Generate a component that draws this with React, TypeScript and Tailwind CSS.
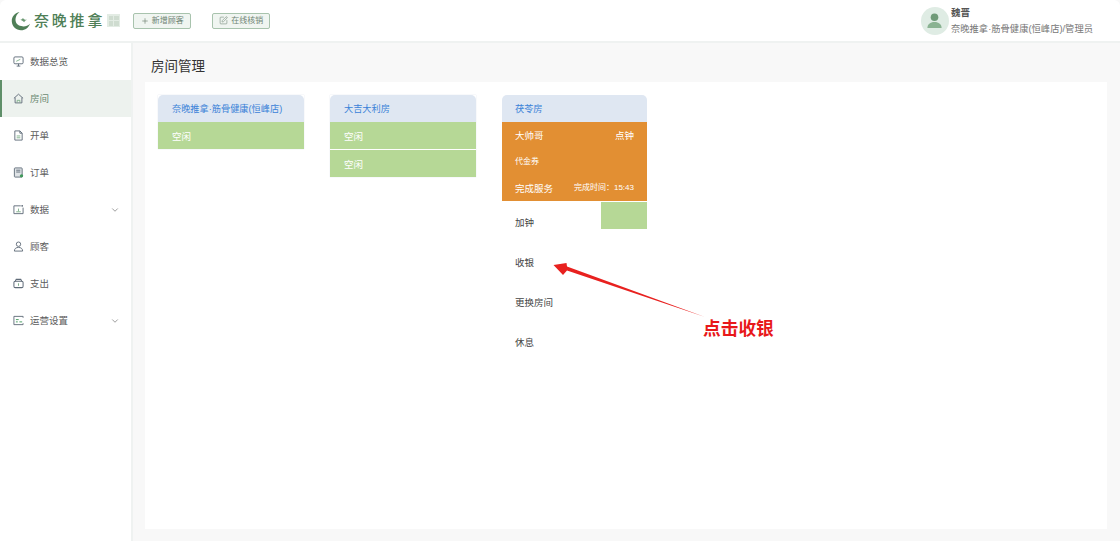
import { ChevronDown, Plus, SquarePen } from "lucide-react";
import type { ReactNode } from "react";

const FONT = "font-['Liberation_Sans','Noto_Sans_CJK_SC',sans-serif]";

const iconClass = "w-[11px] h-[11px] text-[#5f6b78]";
const ACCENT = "#7fb08a";

const DashIcon = () => (
    <svg viewBox="0 0 12 12" className={iconClass} fill="none" stroke="currentColor" strokeWidth="1">
        <rect x="1" y="1" width="10" height="7.500" rx="1.200" />
        <path d="M4 11h4M6 8.500V11" />
        <path d="M3.500 5.800 8 3.600" stroke={ACCENT} />
    </svg>
);
const HomeIcon = () => (
    <svg viewBox="0 0 12 12" className={iconClass} fill="none" stroke="currentColor" strokeWidth="1">
        <path d="M1 5.800 6 1.300l5 4.500M2.300 5v5.800h7.400V5" />
        <path d="M4.500 10.500V8h3v2.500" stroke={ACCENT} />
    </svg>
);
const DocIcon = () => (
    <svg viewBox="0 0 12 12" className={iconClass} fill="none" stroke="currentColor" strokeWidth="1">
        <path d="M2 1h5.500L10 3.500V11H2zM7.500 1v2.500H10" />
        <path d="M4 6.500h4M4 8.500h4" stroke={ACCENT} />
    </svg>
);
const OrderIcon = () => (
    <svg viewBox="0 0 12 12" className={iconClass} fill="none" stroke="currentColor" strokeWidth="1">
        <rect x="1.500" y="1" width="8.500" height="10" rx="0.800" fill="#dfe3e6" />
        <path d="M3.500 3.500h4.500M3.500 5.500h4.500" />
        <circle cx="9.300" cy="9.600" r="1.800" fill="#3f9a5a" stroke="none" />
    </svg>
);
const ChartIcon = () => (
    <svg viewBox="0 0 12 12" className={iconClass} fill="none" stroke="currentColor" strokeWidth="1">
        <path d="M8.500 2H1v8.500h10V4" />
        <path d="M3.500 8.500h5M6 8V5" stroke={ACCENT} />
        <circle cx="10" cy="2" r="1" fill="currentColor" stroke="none" />
    </svg>
);
const UserIcon = () => (
    <svg viewBox="0 0 12 12" className={iconClass} fill="none" stroke="currentColor" strokeWidth="1">
        <circle cx="6" cy="3.500" r="2.400" />
        <path d="M1.500 11c0-2.600 1.800-4 4.500-4s4.500 1.400 4.500 4z" />
    </svg>
);
const WalletIcon = () => (
    <svg viewBox="0 0 12 12" className={iconClass} fill="none" stroke="currentColor" strokeWidth="1.100">
        <rect x="1" y="3.500" width="10" height="7" rx="1.500" />
        <path d="M2.500 3.500 3.500 1.500h5l1 2" />
        <path d="M6 5.800v2.700" stroke={ACCENT} />
    </svg>
);
const SettingIcon = () => (
    <svg viewBox="0 0 12 12" className={iconClass} fill="none" stroke="currentColor" strokeWidth="1">
        <path d="M11 3V1.500H1v9h10V9" />
        <path d="M3.200 5h3M3.200 7.500h2M7 7.500h3" stroke="#3f9a5a" />
    </svg>
);

const menu: { label: string; icon: ReactNode; active?: boolean; arrow?: boolean }[] = [
    { label: "数据总览", icon: <DashIcon /> },
    { label: "房间", icon: <HomeIcon />, active: true },
    { label: "开单", icon: <DocIcon /> },
    { label: "订单", icon: <OrderIcon /> },
    { label: "数据", icon: <ChartIcon />, arrow: true },
    { label: "顾客", icon: <UserIcon /> },
    { label: "支出", icon: <WalletIcon /> },
    { label: "运营设置", icon: <SettingIcon />, arrow: true },
];

const Logo = () => (
    <div className="flex items-center">
        <svg viewBox="0 0 20 20" className="w-[20px] h-[20px]" fill="none">
            <path d="M8.500 1C3.500 2 .5 6 .8 10.500c.3 5 4.300 8.700 9.200 8.700 4.300 0 7.800-2.700 9-6.500-2.500 2.400-5.700 3.200-8.800 2.400C6.500 14.700 4.200 11.500 4.500 8 4.800 5 6.200 2.700 8.500 1z" fill="#4f7f57" />
            <path d="M8 8.500c1.500.6 2.800.2 4-1.500.6 1.300 1.800 2 4 1.800-1.500.6-2.400 1.300-2.800 2.500-.8-1.300-2.500-2.200-5.200-2.800z" fill="#6d9a74" />
        </svg>
        <span className="ml-[3px] text-[15px] leading-none font-medium tracking-[2.800px] text-[#4f7f57]">奈晚推拿</span>
        <span className="ml-[2px] w-[13px] h-[13px] grid grid-cols-2 gap-[1px] p-[1.500px] bg-[#e3ece4]">
            <i className="bg-[#cfdcd0]" />
            <i className="bg-[#cfdcd0]" />
            <i className="bg-[#cfdcd0]" />
            <i className="bg-[#cfdcd0]" />
        </span>
    </div>
);

const TopButton = ({ icon, label }: { icon: ReactNode; label: string }) => (
    <button className="w-[58px] h-[16px] flex items-center justify-center gap-[3px] rounded-[2px] border border-[#a8c3ad] bg-[#f0f5f1] text-[8px] leading-none text-[#6f8474]">
        {icon}
        {label}
    </button>
);

const RoomHead = ({ title, inset = "pl-[14px]" }: { title: string; inset?: string }) => (
    <div className={`h-[27px] ${inset} pt-[2px] flex items-center rounded-t-[5px] bg-[#dfe7f2] text-[9.200px] text-[#3b82d8]`}>{title}</div>
);

const FreeRow = () => (
    <div className="h-[27px] pl-[14px] pt-[4px] flex items-center bg-[#b6d896] text-[9.500px] text-white">空闲</div>
);

const App = () => {
    return (
        <div className={`${FONT} w-[1120px] h-[541px] overflow-hidden flex flex-col bg-[#f8f8f8]`}>
            <header className="h-[43px] shrink-0 pl-[11px] pr-[27px] flex items-center rounded-t-[6px] bg-white border-b-2 border-[#eff2f1]">
                <Logo />
                <div className="ml-[13px] flex gap-[21px]">
                    <TopButton icon={<Plus className="w-[8px] h-[8px]" />} label="新增顾客" />
                    <TopButton icon={<SquarePen className="w-[9px] h-[9px]" strokeWidth={1.500} />} label="在线核销" />
                </div>
                <div className="ml-auto flex items-center gap-[2px]">
                    <div className="w-[28px] h-[28px] rounded-full bg-[#dfece4] flex items-center justify-center">
                        <svg viewBox="0 0 20 20" className="w-[19px] h-[19px]">
                            <circle cx="10" cy="6.500" r="4" fill="#6f9a78" />
                            <path d="M2.500 18c0-4 3-6.500 7.500-6.500s7.500 2.500 7.500 6.500z" fill="#8ab392" />
                        </svg>
                    </div>
                    <div className="flex flex-col gap-[4px] pt-[1px]">
                        <span className="text-[9.500px] leading-[12px] font-bold text-[#555]">魏晋</span>
                        <span className="text-[9.300px] leading-[12px] text-[#777]">奈晚推拿·筋骨健康(恒峰店)/管理员</span>
                    </div>
                </div>
            </header>

            <div className="flex-1 flex min-h-0">
                <aside className="w-[133px] shrink-0 bg-white border-r-2 border-[#eff2f1]">
                    {menu.map((item) => (
                        <div
                            key={item.label}
                            className={`h-[37px] pl-[11px] pr-[11px] flex items-center border-l-2 ${
                                item.active ? "border-[#5f8f69] bg-[#edf2ee] text-[#6b8a72]" : "border-transparent text-[#5c5c5c]"
                            }`}
                        >
                            {item.icon}
                            <span className="ml-[6px] pt-[1px] text-[9.500px]">{item.label}</span>
                            {item.arrow && <ChevronDown className="ml-auto w-[10px] h-[10px] text-[#8a8a8a]" />}
                        </div>
                    ))}
                </aside>

                <main className="flex-1 pl-[12px] pr-[13px] pb-[12px] flex flex-col min-w-0">
                    <h1 className="h-[39px] pl-[6px] pt-[10px] flex items-center text-[13.500px] text-[#333]">房间管理</h1>
                    <div className="flex-1 bg-white pl-[13px] pt-[13px] flex gap-[26px] items-start">
                        <section className="w-[146px] shadow-[0_0_1px_#d5dde5]">
                            <RoomHead title="奈晚推拿·筋骨健康(恒峰店)" />
                            <FreeRow />
                        </section>
                        <section className="w-[146px] shadow-[0_0_1px_#d5dde5]">
                            <RoomHead title="大吉大利房" />
                            <div className="flex flex-col gap-[1px]">
                                <FreeRow />
                                <FreeRow />
                            </div>
                        </section>
                        <section className="w-[145px] relative">
                            <RoomHead title="茯苓房" inset="pl-[13px]" />
                            <div className="h-[79px] pl-[13px] pr-[13px] flex flex-col justify-between pt-[7px] pb-[5px] bg-[#e28f33] text-white">
                                <div className="flex justify-between text-[9.500px]">
                                    <span>大帅哥</span>
                                    <span>点钟</span>
                                </div>
                                <span className="pt-[2px] text-[8px]">代金券</span>
                                <div className="flex justify-between items-center text-[9.500px] pt-[3px]">
                                    <span>完成服务</span>
                                    <span className="text-[8px] pb-[2px]">完成时间：15:43</span>
                                </div>
                            </div>
                            <div className="mt-[1px] h-[27px] bg-[#b6d896]" />
                            <div className="absolute left-0 top-[107px] w-[99px] pl-[13px] text-[9.500px] text-[#444]">
                                <div className="h-[27px] bg-white -ml-[13px] pl-[13px] pt-[14px] leading-[14px]">加钟</div>
                                <div className="h-[40px] pt-[27px] leading-[14px]">收银</div>
                                <div className="h-[40px] pt-[27px] leading-[14px]">更换房间</div>
                                <div className="h-[40px] pt-[27px] leading-[14px]">休息</div>
                            </div>
                        </section>
                    </div>
                </main>
            </div>

            <svg viewBox="0 0 1120 541" className="absolute left-0 top-0 w-[1120px] h-[541px] pointer-events-none">
                <polygon points="705,317 567,266.500 566.500,263 553.500,265 563,275 567,270.500" fill="#e8211f" />
            </svg>
            <span className="absolute left-[703px] top-[317px] text-[17.700px] leading-[24px] font-bold text-[#e8181a]">点击收银</span>
        </div>
    );
};

export default App;
